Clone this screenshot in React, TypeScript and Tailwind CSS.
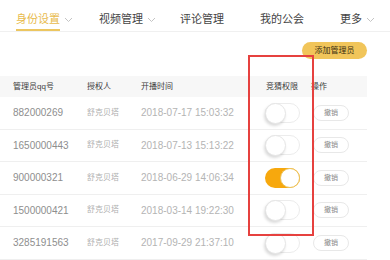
import React from 'react'

const navItems = [
    { label: '身份设置', arrow: true, active: true, cls: 'ml-[16px]' },
    { label: '视频管理', arrow: true, active: false, cls: 'ml-[26px]' },
    { label: '评论管理', arrow: false, active: false, cls: 'ml-[24px]' },
    { label: '我的公会', arrow: false, active: false, cls: 'ml-[36px]' },
    { label: '更多', arrow: true, active: false, cls: 'ml-[36px]' },
]

const rows = [
    { qq: '882000269', time: '2018-07-17 15:03:32', on: false },
    { qq: '1650000443', time: '2018-07-13 15:13:22', on: false },
    { qq: '900000321', time: '2018-06-29 14:06:34', on: true },
    { qq: '1500000421', time: '2018-03-14 19:22:30', on: false },
    { qq: '3285191563', time: '2017-09-29 21:37:10', on: false },
]

const Chevron = () => (
    <svg width="9" height="6" viewBox="0 0 9 6" className="ml-[4px] mt-[1px]">
        <polyline points="1,1 4.5,4.5 8,1" fill="none" stroke="#c4c4c4" strokeWidth="1" />
    </svg>
)

const Toggle = ({ on }: { on: boolean }) => {
    if (on) {
        return (
            <div className="relative w-[35px] h-[20px] rounded-full bg-[#f7a80d]">
                <div className="absolute right-0 top-0 w-[20px] h-[20px] rounded-full bg-white border border-[#ecc35a]" />
            </div>
        )
    }
    return (
        <div className="relative w-[35px] h-[20px] rounded-full bg-white border border-[#ececec]">
            <div className="absolute left-[-1px] top-[-1px] w-[21px] h-[21px] rounded-full bg-white border border-[#e6e6e6] shadow-[-1px_2px_3px_rgba(0,0,0,0.15)]" />
        </div>
    )
}

const App = () => {
    return (
        <div
            className="relative w-[390px] h-[260px] overflow-hidden bg-white"
            style={{ fontFamily: '"Liberation Sans", "Noto Sans CJK SC", sans-serif' }}
        >
            {/* top nav */}
            <div className="flex h-[32px] border-b border-[#f0f0f0]">
                {navItems.map((item) => (
                    <div key={item.label} className={`flex items-center h-full ${item.cls}`}>
                        <div
                            className={`h-[31px] flex items-center pt-[9px] border-b-2 ${
                                item.active ? 'border-[#ecc660] text-[#e8bb4c]' : 'border-transparent text-[#444444]'
                            } text-[11px]`}
                        >
                            {item.label}
                        </div>
                        {item.arrow && <div className="pt-[8px]"><Chevron /></div>}
                    </div>
                ))}
            </div>

            {/* add button */}
            <div className="flex justify-end pr-[23px] pt-[10px]">
                <button className="w-[65px] h-[17px] rounded-full bg-[#f1c55a] text-[8px] text-[#3a2f12] flex items-center justify-center">
                    添加管理员
                </button>
            </div>

            {/* table */}
            <div className="mt-[17px] w-[367px]">
                <div className="flex items-center h-[21px] bg-[#f7f7f7] text-[8px] text-[#3c3c3c]">
                    <div className="w-[87px] pl-[13px]">管理员qq号</div>
                    <div className="w-[54px]">授权人</div>
                    <div className="w-[124px]">开播时间</div>
                    <div className="w-[46px] pl-[1px]">竞猜权限</div>
                    <div className="flex-1">操作</div>
                </div>
                {rows.map((r) => (
                    <div key={r.qq} className="flex items-center h-[32.5px] border-b border-[#efefef]">
                        <div className="w-[87px] pl-[13px] text-[10px] text-[#8e8e8e]">{r.qq}</div>
                        <div className="w-[54px] text-[8px] text-[#b0b0b0]">舒克贝塔</div>
                        <div className="w-[124px] text-[10px] text-[#b4b4b4]">{r.time}</div>
                        <div className="w-[48px]">
                            <Toggle on={r.on} />
                        </div>
                        <div className="flex-1">
                            <div className="w-[36px] h-[16px] rounded-full border border-[#e8e8e8] flex items-center justify-center text-[7px] text-[#8a8a8a]">
                                撤销
                            </div>
                        </div>
                    </div>
                ))}
            </div>

            {/* red annotation box */}
            <div className="absolute left-[248px] top-[55px] w-[66px] h-[181px] border-2 border-[#e6413f]" />
        </div>
    )
}

export default App
